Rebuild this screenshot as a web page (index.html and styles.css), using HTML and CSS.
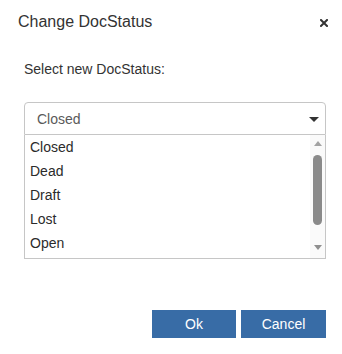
FILE: index.html
```html
<!DOCTYPE html>
<html lang="en">
<head>
    <meta charset="UTF-8">
    <meta name="viewport" content="width=device-width, initial-scale=1.0">
    <title>Change DocStatus</title>
    <link rel="stylesheet" href="styles.css">
</head>
<body>

    <div class="dialog">
        <div class="dialog-header">
            <span class="dialog-title">Change DocStatus</span>
            <button class="close-btn" aria-label="Close">
                <svg width="8" height="8" viewBox="0 0 8 8"><path d="M1 1L7 7M7 1L1 7" stroke="#333" stroke-width="2" stroke-linecap="square"/></svg>
            </button>
        </div>

        <div class="dialog-body">
            <p class="field-label">Select new DocStatus:</p>

            <div class="combo">
                <div class="combo-input">
                    <span>Closed</span>
                    <span class="caret"></span>
                </div>
                <div class="combo-list">
                    <ul class="combo-items">
                        <li>Closed</li>
                        <li>Dead</li>
                        <li>Draft</li>
                        <li>Lost</li>
                        <li>Open</li>
                    </ul>
                    <div class="scrollbar">
                        <span class="arrow-up"></span>
                        <span class="thumb"></span>
                        <span class="arrow-down"></span>
                    </div>
                </div>
            </div>
        </div>

        <div class="dialog-footer">
            <button class="btn">Ok</button>
            <button class="btn">Cancel</button>
        </div>
    </div>

</body>
</html>
```

FILE: styles.css
```css
body{
    margin: 0;
    background: #fff;
    font-family: "Liberation Sans", Arial, sans-serif;
    color: #333;
}
.dialog{
    width: 342px;
    height: 354px;
}
.dialog-header{
    display: flex;
    justify-content: space-between;
    align-items: center;
    padding: 12px 14px 0 18px;
}
.dialog-title{
    font-size: 16px;
    line-height: 20px;
    color: #333;
}
.close-btn{
    border: 0;
    background: transparent;
    padding: 0;
    margin-top: 2px;
    width: 8px;
    height: 8px;
    display: flex;
}
.dialog-body{
    padding: 0 16px 0 24px;
}
.field-label{
    margin: 29px 0 0;
    font-size: 14px;
    line-height: 16px;
}
.combo{
    margin-top: 25px;
    font-size: 14px;
}
.combo-input{
    display: flex;
    align-items: center;
    justify-content: space-between;
    height: 31px;
    padding: 0 6px 0 12px;
    border: 1px solid #c6c6c6;
    border-radius: 4px 4px 0 0;
    color: #5a5a5a;
    line-height: 16px;
}
.caret{
    width: 0;
    height: 0;
    margin-top: 2px;
    border-left: 5px solid transparent;
    border-right: 5px solid transparent;
    border-top: 5px solid #333;
}
.combo-list{
    display: flex;
    height: 123px;
    border: 1px solid #c6c6c6;
    border-top: 0;
    overflow: hidden;
}
.combo-items{
    flex: 1;
    list-style: none;
    margin: 0;
    padding: 0;
}
.combo-items li{
    padding-left: 5px;
    line-height: 24px;
    color: #2b2b2b;
}
.scrollbar{
    width: 15px;
    display: flex;
    flex-direction: column;
    align-items: center;
    background: #fafafa;
}
.arrow-up{
    margin-top: 6px;
    border-left: 4px solid transparent;
    border-right: 4px solid transparent;
    border-bottom: 5px solid #a3a3a3;
}
.thumb{
    margin-top: 9px;
    width: 9px;
    height: 70px;
    border-radius: 5px;
    background: #8a8a8a;
}
.arrow-down{
    margin-top: auto;
    margin-bottom: 8px;
    border-left: 4px solid transparent;
    border-right: 4px solid transparent;
    border-top: 5px solid #8f8f8f;
}
.dialog-footer{
    display: flex;
    justify-content: flex-end;
    gap: 5px;
    margin-top: 51px;
    padding-right: 16px;
}
.btn{
    height: 28px;
    width: 84px;
    border: 0;
    border-radius: 0;
    background: #386ca6;
    color: #fff;
    font-family: "Liberation Sans", Arial, sans-serif;
    font-size: 14px;
    padding: 0;
}
.btn + .btn{
    width: 85px;
}
```
